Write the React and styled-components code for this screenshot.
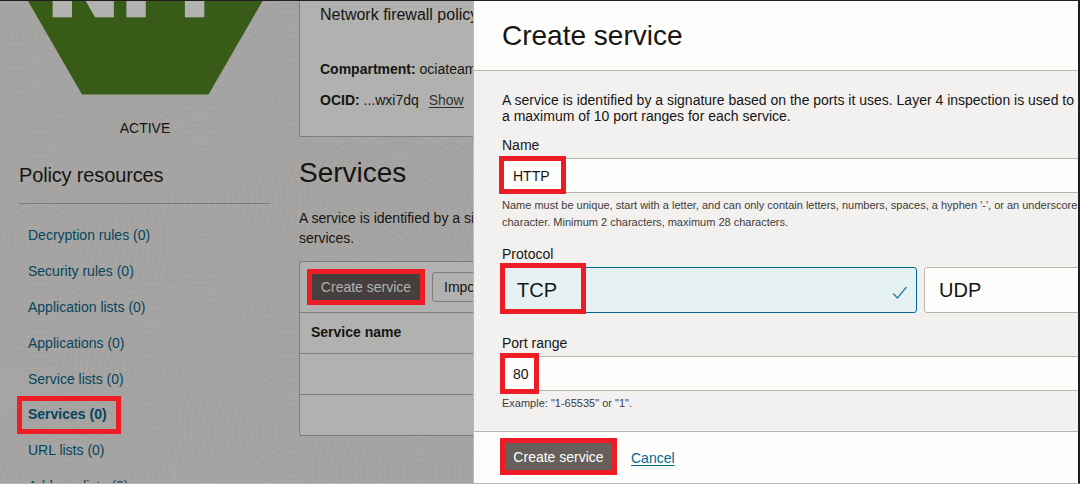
import React from 'react';
import styled, { createGlobalStyle, css } from 'styled-components';

const GlobalStyle = createGlobalStyle`
  * { box-sizing: border-box; }
  body { margin: 0; overflow: hidden; }
  h1, h2, h3, p, ul { margin: 0; padding: 0; font-weight: 400; list-style: none; }
  button { font: inherit; margin: 0; padding: 0; }
`;

const Shell = styled.div`
  display: flex;
  width: 1080px;
  height: 484px;
  overflow: hidden;
  border-top: 1px solid #231f20;
  border-right: 2px solid #1f1d1e;
  border-bottom: 1px solid #b9b8b6;
  font: 14px/20px "Liberation Sans", Arial, sans-serif;
  color: #161513;
`;

const Page = styled.div`
  position: relative;
  z-index: 0;
  display: flex;
  width: 473px;
  flex: none;
  overflow: hidden;
  background: #a6a5a3;
`;

const Backdrop = styled.svg`
  position: absolute;
  z-index: -1;
  inset: 0;
  width: 473px;
  height: 482px;
`;

const Sidebar = styled.nav`
  width: 299px;
  flex: none;
  overflow: hidden;
`;

const Badge = styled.svg`
  display: block;
  width: 290px;
  height: 94px;
`;

const Status = styled.div`
  width: 290px;
  margin-top: 23px;
  text-align: center;
`;

const SideTitle = styled.h3`
  width: 252px;
  margin: 25px 0 13px 19px;
  padding-bottom: 16px;
  border-bottom: 1px solid #7f7d7b;
  font-size: 20px;
  line-height: 24px;
  letter-spacing: -0.15px;
`;

const SideItem = styled.li`
  height: 36px;
  margin-top: ${(p) => (p.$active ? -1 : 0)}px;
  padding-left: 28px;
  line-height: 36px;
  color: #05455e;
  font-weight: ${(p) => (p.$active ? 700 : 400)};
`;

const Main = styled.main`
  width: 174px;
  flex: none;
  overflow: hidden;
  white-space: nowrap;
`;

const InfoCard = styled.section`
  height: 136px;
  padding: 4px 0 0 20px;
  border-left: 1px solid #817f7d;
  border-bottom: 1px solid #817f7d;
  background: #b1b1af;
`;

const InfoTitle = styled.p`
  margin-bottom: 34px;
  font-size: 16px;
`;

const InfoRow = styled.p`
  margin-bottom: 11px;
`;

const ShowLink = styled.a`
  margin-left: 6px;
  color: #33312f;
  text-decoration: underline;
  text-underline-offset: 2px;
`;

const Heading = styled.h1`
  margin-top: 20px;
  font-size: 28px;
  line-height: 32px;
`;

const Intro = styled.p`
  margin: 19px 0 13px;
`;

const Table = styled.section`
  height: 175px;
  border: 1px solid #7f7d7b;
  border-right: 0;
  border-radius: 3px 0 0 3px;
  background: #b1b1af;
`;

const Toolbar = styled.div`
  display: flex;
  height: 50px;
  padding: 10px 0 0 12px;
  gap: 12px;
`;

const Row = styled.div`
  height: 41px;
  padding-left: 11px;
  border-top: 1px solid #7f7d7b;
  font-weight: 700;
  line-height: 38px;
`;

const marked = css`
  position: relative;
  &::after {
    content: '';
    position: absolute;
    inset: ${(p) => p.$mark};
    border: 5px solid #ee1c25;
    pointer-events: none;
  }
`;

const Mark = styled.span`
  display: inline-block;
  ${marked}
`;

const PrimaryButton = styled.button`
  flex: none;
  width: ${(p) => (p.$dimmed ? 108 : 107)}px;
  height: ${(p) => (p.$dimmed ? 28 : 27)}px;
  margin-top: 1px;
  padding-top: ${(p) => (p.$dimmed ? 0 : 2)}px;
  border: 0;
  background: ${(p) => (p.$dimmed ? '#45403e' : '#665f5b')};
  color: ${(p) => (p.$dimmed ? '#b1b1af' : '#ffffff')};
  line-height: ${(p) => (p.$dimmed ? 28 : 25)}px;
  white-space: nowrap;
  ${marked}
`;

const OutlineButton = styled.button`
  flex: none;
  height: 30px;
  padding: 0 11px;
  border: 1px solid #7f7d7b;
  border-radius: 3px;
  background: transparent;
  color: #161513;
`;

const Panel = styled.aside`
  display: flex;
  flex-direction: column;
  flex: 1;
  min-width: 0;
  overflow: hidden;
  border-left: 1px solid #bab9b7;
  background: #f3f1f0;
  white-space: nowrap;
`;

const PanelHeader = styled.header`
  height: 70px;
  flex: none;
  padding: 18px 0 0 28px;
  border-bottom: 1px solid #b9b5ad;
  background: #fdfdfc;
  font-size: 28px;
  line-height: 34px;
`;

const PanelBody = styled.div`
  height: 360px;
  flex: none;
  padding: 21px 0 0 28px;
`;

const Description = styled.p`
  line-height: 16px;
`;

const Label = styled.div`
  margin-top: ${(p) => p.$gap}px;
  line-height: 16px;
`;

const Field = styled.div`
  height: 35px;
  margin-top: 5px;
  padding-left: 10px;
  border: 1px solid #b9b5ad;
  border-right: 0;
  background: #fdfdfc;
  line-height: 35px;
`;

const Hint = styled.p`
  margin-top: 4px;
  font-size: 11px;
  line-height: 17px;
  color: #403c39;
`;

const Options = styled.div`
  display: flex;
  gap: 7px;
  margin-top: 5px;
`;

const Option = styled.div`
  display: flex;
  flex: none;
  align-items: center;
  justify-content: space-between;
  width: 415px;
  height: 46px;
  padding: 0 8px 0 14px;
  border: 1px solid ${(p) => (p.$selected ? '#00688c' : '#b9b5ad')};
  border-radius: 3px;
  background: ${(p) => (p.$selected ? '#e6f1f4' : '#fdfdfc')};
  font-size: 20px;
  line-height: 24px;
`;

const Check = styled.svg`
  width: 16px;
  height: 14px;
  margin-top: 5px;
`;

const PanelFooter = styled.footer`
  display: flex;
  flex: 1;
  align-items: flex-start;
  gap: 19px;
  padding: 10px 0 0 31px;
  border-top: 1px solid #b7b6b3;
  background: #fdfdfc;
`;

const Cancel = styled.a`
  margin-top: 6px;
  color: #00688c;
  text-decoration: underline;
  text-underline-offset: 2px;
`;

const resources = [
  'Decryption rules (0)',
  'Security rules (0)',
  'Application lists (0)',
  'Applications (0)',
  'Service lists (0)',
  'Services (0)',
  'URL lists (0)',
  'Address lists (0)',
];

const ripples = [
  [390, 60, 130],
  [60, 40, 130],
  [290, 100, 110],
  [400, 220, 120],
  [20, 150, 110],
  [330, 330, 120],
  [200, 200, 115],
  [40, 240, 130],
  [150, 370, 90],
  [290, 430, 120],
  [420, 470, 110],
  [70, 490, 100],
];

function Ripples() {
  return (
    <Backdrop viewBox="0 0 473 482" fill="none">
      {ripples.map(([x, y, r]) => (
        <g key={`${x}-${y}`} stroke="#a3a2a0" strokeWidth="2">
          <circle cx={x} cy={y} r={r} fill="#a6a5a3" />
          {Array.from({ length: Math.floor(r / 6) }, (_, i) => (
            <circle key={i} cx={x} cy={y} r={r - 6 * (i + 1)} />
          ))}
        </g>
      ))}
    </Backdrop>
  );
}

export default function App() {
  return (
    <>
      <GlobalStyle />
      <Shell>
        <Page>
          <Ripples />
          <Sidebar>
            <Badge viewBox="0 1 290 94">
              <polygon points="28,1 262.5,1 208.5,94.5 82,94.5" fill="#385b17" />
              <g
                fontFamily="Roboto, sans-serif"
                fontWeight="900"
                fontSize="99"
                fill="#b2b2b0"
                stroke="#b2b2b0"
                strokeWidth="2.4"
              >
                <text x="48.5" y="15.6">N</text>
                <text x="122.2" y="15.6">F</text>
                <text x="180.8" y="15.6">P</text>
              </g>
            </Badge>
            <Status>ACTIVE</Status>
            <SideTitle>Policy resources</SideTitle>
            <ul>
              {resources.map((name) =>
                name === 'Services (0)' ? (
                  <SideItem key={name} $active>
                    <Mark $mark="0 -14px -2px -11px">{name}</Mark>
                  </SideItem>
                ) : (
                  <SideItem key={name}>{name}</SideItem>
                )
              )}
            </ul>
          </Sidebar>
          <Main>
            <InfoCard>
              <InfoTitle>Network firewall policy</InfoTitle>
              <InfoRow><b>Compartment:</b> ociateam</InfoRow>
              <InfoRow><b>OCID:</b> ...wxi7dq <ShowLink>Show</ShowLink></InfoRow>
            </InfoCard>
            <Heading>Services</Heading>
            <Intro>
              A service is identified by a signature<br />
              services.
            </Intro>
            <Table>
              <Toolbar>
                <PrimaryButton $dimmed $mark="-4px -5px -4px -5px">Create service</PrimaryButton>
                <OutlineButton>Import</OutlineButton>
              </Toolbar>
              <Row>Service name</Row>
              <Row />
              <Row />
            </Table>
          </Main>
        </Page>
        <Panel>
          <PanelHeader>Create service</PanelHeader>
          <PanelBody>
            <Description>
              A service is identified by a signature based on the ports it uses. Layer 4 inspection is used to<br />
              a maximum of 10 port ranges for each service.
            </Description>
            <Label $gap={13}>Name</Label>
            <Field><Mark $mark="-3px -16px 0 -14px">HTTP</Mark></Field>
            <Hint>
              Name must be unique, start with a letter, and can only contain letters, numbers, spaces, a hyphen '-', or an underscore<br />
              character. Minimum 2 characters, maximum 28 characters.
            </Hint>
            <Label $gap={15}>Protocol</Label>
            <Options>
              <Option $selected>
                <Mark $mark="-15px -29px -12px -17px">TCP</Mark>
                <Check viewBox="0 0 16 14" fill="none" stroke="#227e9e" strokeWidth="1.2">
                  <path d="M1.2 7.5 5.5 12 14.5 1" />
                </Check>
              </Option>
              <Option>UDP</Option>
            </Options>
            <Label $gap={22}>Port range</Label>
            <Field><Mark $mark="-4px -10px -2px -13px">80</Mark></Field>
            <Hint>Example: "1-65535" or "1".</Hint>
          </PanelBody>
          <PanelFooter>
            <PrimaryButton $mark="-5px">Create service</PrimaryButton>
            <Cancel>Cancel</Cancel>
          </PanelFooter>
        </Panel>
      </Shell>
    </>
  );
}
